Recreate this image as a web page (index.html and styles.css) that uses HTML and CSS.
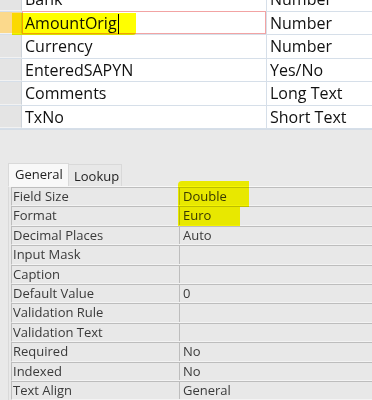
FILE: index.html
```html
<!DOCTYPE html>
<html lang="en">
<head>
  <meta charset="UTF-8">
  <title>Table Design - Field Properties</title>
  <link rel="stylesheet" href="styles.css">
</head>
<body>

  <div class="design">
    <div class="row first"><div class="sel"></div><div class="name">Bank</div><div class="type">Number</div></div>
    <div class="row current"><div class="sel"></div><div class="name">AmountOrig<span class="caret"></span></div><div class="type">Number</div></div>
    <div class="row"><div class="sel"></div><div class="name">Currency</div><div class="type">Number</div></div>
    <div class="row"><div class="sel"></div><div class="name">EnteredSAPYN</div><div class="type">Yes/No</div></div>
    <div class="row"><div class="sel"></div><div class="name">Comments</div><div class="type">Long Text</div></div>
    <div class="row"><div class="sel"></div><div class="name">TxNo</div><div class="type">Short Text</div></div>
  </div>

  <div class="props">
    <div class="tabs">
      <div class="tab active">General</div>
      <div class="tab">Lookup</div>
    </div>
    <div class="sheet">
      <div class="prop"><div class="label">Field Size</div><div class="value">Double</div></div>
      <div class="prop"><div class="label">Format</div><div class="value">Euro</div></div>
      <div class="prop"><div class="label">Decimal Places</div><div class="value">Auto</div></div>
      <div class="prop"><div class="label">Input Mask</div><div class="value"></div></div>
      <div class="prop"><div class="label">Caption</div><div class="value"></div></div>
      <div class="prop"><div class="label">Default Value</div><div class="value">0</div></div>
      <div class="prop"><div class="label">Validation Rule</div><div class="value"></div></div>
      <div class="prop"><div class="label">Validation Text</div><div class="value"></div></div>
      <div class="prop"><div class="label">Required</div><div class="value">No</div></div>
      <div class="prop"><div class="label">Indexed</div><div class="value">No</div></div>
      <div class="prop"><div class="label">Text Align</div><div class="value">General</div></div>
    </div>
  </div>

  <!-- highlighter marks drawn over the screenshot -->
  <div class="mark mark-name"></div>
  <div class="mark mark-size"></div>
  <div class="mark mark-format"></div>

</body>
</html>
```

FILE: styles.css
```css
body {
  margin: 0;
  background-color: #e9e9e9;
  font-family: 'Open Sans', 'Noto Sans', sans-serif;
  overflow: hidden;
}

/* field list */
.design {
  background: #fff;
  overflow: hidden;
  height: 129px;
  border-bottom: 1px solid #d5dde6;
}

.row {
  display: grid;
  grid-template-columns: 22px 244px 1fr;
  height: 23.5px;
  box-sizing: border-box;
  border-bottom: 1px solid #d6dfe9;
}

.row.first {
  margin-top: -12px;
}

.sel {
  background: #e4e4e4;
  border-right: 1px solid #cdd3da;
  border-bottom: 1px solid #f2f2f2;
}

.name, .type {
  font-size: 16px;
  line-height: 22.5px;
  color: #111;
  padding-left: 3px;
  white-space: nowrap;
}

.type {
  border-left: 1px solid #d6dfe9;
  padding-left: 3px;
}

.current .sel {
  background: #fbd98c;
}

.current .name {
  position: relative;
  box-shadow: inset 0 0 0 1px #f2a3a3;
  margin-top: -1px;
  padding-top: 1px;
}

.caret {
  display: inline-block;
  width: 1px;
  height: 20px;
  background: #000;
  vertical-align: -5px;
  margin-left: 1px;
}

/* properties pane */
.props {
  margin-top: 33px;
  padding-left: 8px;
}

.tabs {
  display: flex;
  height: 23px;
  align-items: flex-end;
}

.tab {
  box-sizing: border-box;
  font-size: 13px;
  color: #222;
  border: 1px solid #d9d9d9;
  border-bottom: none;
  padding-left: 6px;
}

.tab.active {
  width: 61px;
  height: 23px;
  line-height: 20px;
  background: #f8f8f8;
}

.tab:not(.active) {
  width: 53px;
  height: 22px;
  line-height: 22px;
  background: #e8e8e8;
  border-left: none;
  padding-left: 5px;
}

.sheet {
  border-left: 1px solid #d9d9d9;
  border-top: 1px solid #f7f7f7;
  padding-left: 2px;
}

.prop {
  display: grid;
  grid-template-columns: 167px 1fr;
  height: 19.4px;
  box-sizing: border-box;
  border-top: 1px solid #bdbdbd;
  border-bottom: 1px solid #f3f3f3;
  border-left: 1px solid #bdbdbd;
  background: #e8e8e8;
}

.label, .value {
  font-size: 13px;
  line-height: 17.4px;
  color: #3a3a3a;
  padding-left: 1px;
  white-space: nowrap;
}

.value {
  border-left: 1px solid #bdbdbd;
  padding-left: 3px;
}

/* yellow highlighter */
.mark {
  position: absolute;
  background: #ffff00;
  mix-blend-mode: multiply;
}

.mark-name {
  left: 12px;
  top: 13px;
  width: 124px;
  height: 22px;
  border-bottom-right-radius: 3px;
}

.mark-size {
  left: 178px;
  top: 181px;
  width: 71px;
  height: 26px;
  border-top-left-radius: 4px;
}

.mark-format {
  left: 178px;
  top: 207px;
  width: 62px;
  height: 19px;
}
```
